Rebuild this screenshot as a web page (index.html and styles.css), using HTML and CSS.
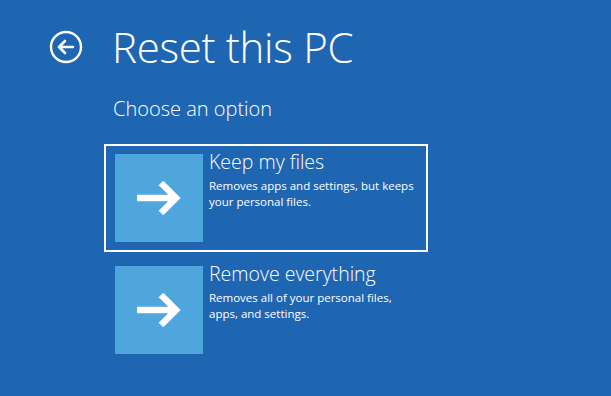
FILE: index.html
```html
<!DOCTYPE html>
<html lang="en">
<head>
    <meta charset="UTF-8">
    <title>Reset this PC</title>
    <link rel="stylesheet" href="styles.css">
</head>
<body>
    <div class="page">
        <div class="page-header">
            <button class="back-btn" aria-label="Back">
                <svg width="34" height="34" viewBox="0 0 34 34">
                    <circle cx="17" cy="17" r="15" fill="none" stroke="#fff" stroke-width="2.4"/>
                    <path d="M10 17 H24 M16 11 L10 17 L16 23" fill="none" stroke="#fff" stroke-width="2.6" stroke-linecap="round" stroke-linejoin="round"/>
                </svg>
            </button>
            <h1 class="page-title">Reset this PC</h1>
        </div>
        <div class="subtitle">Choose an option</div>
        <ul class="options">
            <li class="option selected">
                <div class="option-tile">
                    <svg width="44" height="34" viewBox="0 0 44 34">
                        <path d="M0 17 H39 M24 2 L39 17 L24 32" fill="none" stroke="#fff" stroke-width="6.5" stroke-linejoin="miter"/>
                    </svg>
                </div>
                <div class="option-text">
                    <div class="option-title">Keep my files</div>
                    <div class="option-desc">Removes apps and settings, but keeps<br>your personal files.</div>
                </div>
            </li>
            <li class="option">
                <div class="option-tile">
                    <svg width="44" height="34" viewBox="0 0 44 34">
                        <path d="M0 17 H39 M24 2 L39 17 L24 32" fill="none" stroke="#fff" stroke-width="6.5" stroke-linejoin="miter"/>
                    </svg>
                </div>
                <div class="option-text">
                    <div class="option-title">Remove everything</div>
                    <div class="option-desc">Removes all of your personal files,<br>apps, and settings.</div>
                </div>
            </li>
        </ul>
    </div>
</body>
</html>
```

FILE: styles.css
```css
body {
    margin: 0;
    padding: 0;
    background-color: #1f66b2;
    color: #fff;
    font-family: "Open Sans", "Noto Sans", sans-serif;
    height: 396px;
    overflow: hidden;
}

.page {
    padding: 22px 0 0 49px;
}

.page-header {
    display: flex;
    align-items: center;
    height: 50px;
}

.back-btn {
    width: 34px;
    height: 34px;
    padding: 0;
    margin: 0;
    border: none;
    background: none;
    cursor: pointer;
    display: flex;
}

.page-title {
    margin: 0 0 0 29px;
    font-size: 42px;
    font-weight: 300;
    line-height: 50px;
    letter-spacing: -0.3px;
}

.subtitle {
    margin: 24px 0 0 64px;
    font-size: 20px;
    font-weight: 300;
    line-height: 26px;
}

.options {
    list-style: none;
    margin: 22px 0 0 55px;
    padding: 0;
    display: flex;
    flex-direction: column;
    gap: 4px;
}

.option {
    width: 302px;
    height: 88px;
    padding: 8px 9px;
    border: 2px solid transparent;
    display: flex;
    cursor: pointer;
}

.option.selected {
    border-color: #fff;
}

.option-tile {
    width: 88px;
    height: 88px;
    background: #4ea6dc;
    display: flex;
    align-items: center;
    justify-content: center;
    flex-shrink: 0;
}

.option-text {
    margin-left: 6px;
    margin-top: -5px;
}

.option-title {
    font-size: 19.5px;
    font-weight: 300;
    line-height: 26px;
}

.option-desc {
    margin-top: 3px;
    font-size: 11.5px;
    line-height: 16px;
}
```
